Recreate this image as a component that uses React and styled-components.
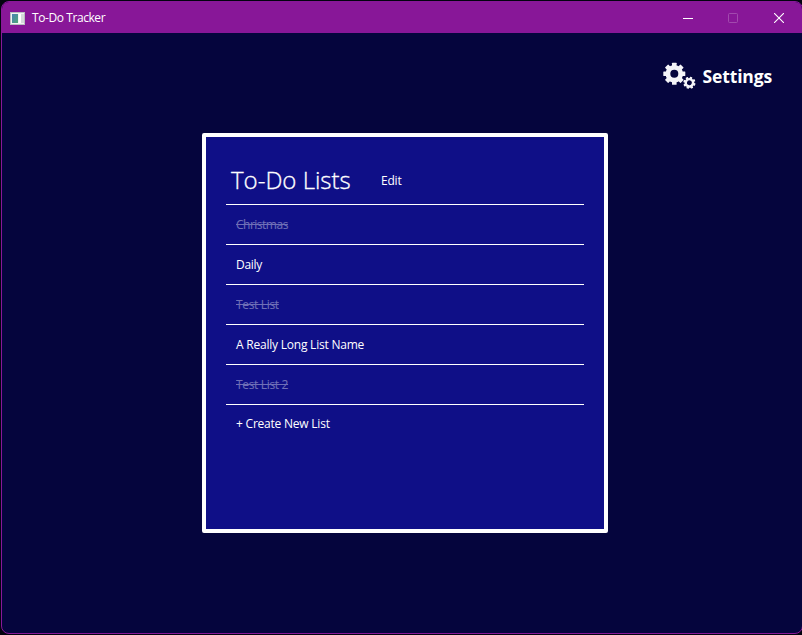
import React from "react";
import styled, { createGlobalStyle } from "styled-components";

const Global = createGlobalStyle`
  * { box-sizing: border-box; }
  html, body { margin: 0; background: #02030f; overflow: hidden; }
  body { font-family: "Open Sans", "Noto Sans", sans-serif; color: #fff; }
`;

const Desktop = styled.div`
  width: 802px;
  height: 635px;
  padding: 1px 0 1px 1px;
  overflow: hidden;
`;

const Window = styled.main`
  width: 802px;
  height: 633px;
  display: flex;
  flex-direction: column;
  background: #05053d;
  border: 1px solid #881798;
  border-radius: 8px;
  overflow: hidden;
`;

const TitleBar = styled.header`
  flex: none;
  height: 31px;
  display: flex;
  align-items: center;
  padding-left: 8px;
  background: #881798;
`;

const AppName = styled.span`
  flex: 1;
  margin-left: 6px;
  font-size: 12px;
  line-height: 16px;
  letter-spacing: -0.42px;
`;

const Caption = styled.button`
  width: 46px;
  height: 31px;
  padding: 0;
  border: 0;
  background: none;
  color: #fff;
  opacity: ${(p) => (p.disabled ? 0.22 : 1)};
  display: grid;
  place-items: center;
`;

const Content = styled.div`
  flex: 1;
  display: flex;
  flex-direction: column;
  align-items: flex-start;
`;

const Settings = styled.button`
  align-self: flex-end;
  height: 32px;
  margin: 27px 30px 0 0;
  padding: 0;
  display: flex;
  align-items: center;
  gap: 7px;
  border: 0;
  background: none;
  color: #fff;
  font: 700 17.5px/24px "Open Sans", sans-serif;
  letter-spacing: -0.15px;
`;

const Panel = styled.section`
  width: 406px;
  height: 400px;
  margin: 41px 0 0 200px;
  padding: 20px;
  border: 4px solid #fff;
  border-radius: 2px;
  background: #0f0f87;
`;

const PanelHead = styled.div`
  height: 48px;
  display: flex;
  align-items: center;
  padding: 0 5px;
  border-bottom: 1px solid #fff;
`;

const Title = styled.h1`
  width: 150px;
  margin: 0;
  padding-bottom: 2px;
  white-space: nowrap;
  font-size: 24px;
  line-height: 32px;
  font-weight: 300;
  -webkit-text-stroke: 0.3px #fff;
`;

const Edit = styled.button`
  padding: 0;
  border: 0;
  background: none;
  color: #fff;
  font: 12px/16px "Open Sans", sans-serif;
  letter-spacing: -0.2px;
`;

const Lists = styled.ul`
  margin: 0;
  padding: 0;
  list-style: none;
`;

const Row = styled.li`
  height: 40px;
  padding: 12px 10px 0;
  font-size: 12px;
  line-height: 16px;
  border-bottom: 1px solid #fff;
`;

const Name = styled.span`
  opacity: ${(p) => (p.$done ? 0.4 : 1)};
  text-decoration: ${(p) => (p.$done ? "line-through" : "none")};
  letter-spacing: ${(p) => p.$track}px;
`;

const Create = styled.button`
  display: block;
  margin: 11px 0 0 10px;
  padding: 0;
  border: 0;
  background: none;
  color: #fff;
  font: 12px/16px "Open Sans", sans-serif;
  letter-spacing: -0.22px;
`;

const lists = [
  { name: "Christmas", done: true, track: -0.5 },
  { name: "Daily", track: -0.3 },
  { name: "Test List", done: true, track: -0.33 },
  { name: "A Really Long List Name", track: -0.22 },
  { name: "Test List 2", done: true, track: -0.33 },
];

function Gear({ x, y, r, hole, tooth, turn = 0 }) {
  const rim = r * 0.8;
  return (
    <g transform={`translate(${x} ${y}) rotate(${turn})`}>
      <circle r={(rim + hole) / 2} fill="none" stroke="#f4f4f8" strokeWidth={rim - hole} />
      {[0, 45, 90, 135, 180, 225, 270, 315].map((a) => (
        <rect key={a} x={-tooth / 2} y={-r} width={tooth} height={r * 0.35} rx="0.5" fill="#f4f4f8" transform={`rotate(${a})`} />
      ))}
    </g>
  );
}

export default function App() {
  return (
    <Desktop>
      <Global />
      <Window>
        <TitleBar>
          <svg width="16" height="14" viewBox="0 0 16 14">
            <defs>
              <linearGradient id="pane" x1="0" y1="0" x2="1" y2="1">
                <stop offset="0" stopColor="#4a82b4" />
                <stop offset="1" stopColor="#4fa779" />
              </linearGradient>
            </defs>
            <rect x="0.5" y="1.5" width="14" height="12" fill="#f1f3f3" stroke="#b9bdc0" />
            <rect x="2" y="3" width="6" height="9" fill="url(#pane)" />
            <rect x="9" y="3" width="2" height="9" fill="#fff" />
            <rect x="11" y="3" width="3" height="9" fill="#d5dadb" />
          </svg>
          <AppName>To-Do Tracker</AppName>
          <Caption>
            <svg width="12" height="10"><path d="M2 5.5H12" stroke="#fff" /></svg>
          </Caption>
          <Caption disabled>
            <svg width="10" height="10"><rect x=".5" y=".5" width="9" height="9" rx="1" fill="none" stroke="#fff" /></svg>
          </Caption>
          <Caption>
            <svg width="10" height="10"><path d="M0 0L10 10M10 0L0 10" stroke="#fff" strokeWidth="1.1" /></svg>
          </Caption>
        </TitleBar>
        <Content>
          <Settings>
            <svg width="33" height="28" viewBox="662 62 33 28">
              <Gear x={673.3} y={73.8} r={11} hole={4} tooth={4.6} />
              <Gear x={688.4} y={82.8} r={6.1} hole={2.4} tooth={2.5} turn={18} />
            </svg>
            Settings
          </Settings>
          <Panel>
            <PanelHead>
              <Title>To-Do Lists</Title>
              <Edit>Edit</Edit>
            </PanelHead>
            <Lists>
              {lists.map((l) => (
                <Row key={l.name}>
                  <Name $done={l.done} $track={l.track}>{l.name}</Name>
                </Row>
              ))}
            </Lists>
            <Create>+ Create New List</Create>
          </Panel>
        </Content>
      </Window>
    </Desktop>
  );
}
